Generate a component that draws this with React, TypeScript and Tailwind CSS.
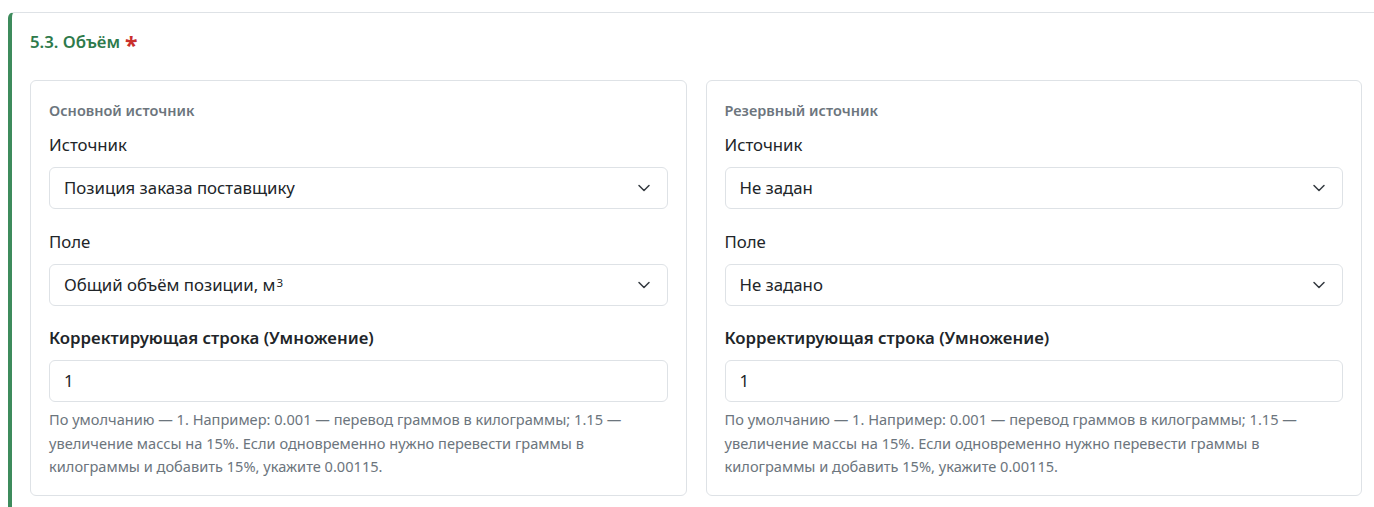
import type { ReactNode } from "react"

interface SourceBlock {
  caption: string
  source: ReactNode
  field: ReactNode
  factor: string
}

const BLOCKS: SourceBlock[] = [
  {
    caption: "Основной источник",
    source: "Позиция заказа поставщику",
    field: (
      <>
        Общий объём позиции, м<sup className="ml-[1px] text-[11.5px] relative -top-[4px]">3</sup>
      </>
    ),
    factor: "1",
  },
  {
    caption: "Резервный источник",
    source: "Не задан",
    field: "Не задано",
    factor: "1",
  },
]

function Chevron() {
  return (
    <svg width="14" height="10" viewBox="0 0 16 12" fill="none" className="shrink-0">
      <path d="m2 3 6 6 6-6" stroke="#343a40" strokeWidth="1.8" strokeLinecap="round" strokeLinejoin="round" />
    </svg>
  )
}

function FakeSelect({ children }: { children: ReactNode }) {
  return (
    <div className="flex items-center justify-between h-[42px] pl-[14px] pr-[16px] rounded-md border border-[#dee2e6] bg-white text-[16.8px] text-[#212529]">
      <span className="leading-6">{children}</span>
      <Chevron />
    </div>
  )
}

function SourceCard({ block }: { block: SourceBlock }) {
  return (
    <div className="flex-1 rounded-md border border-[#dee2e6] bg-white px-[18px] pt-[19px] pb-[16px]">
      <div className="text-[14.5px] leading-[21px] font-semibold text-[#6c757d]">{block.caption}</div>

      <div className="mt-[12px] text-[16.8px] leading-6 text-[#212529]">Источник</div>
      <div className="mt-[10px]">
        <FakeSelect>{block.source}</FakeSelect>
      </div>

      <div className="mt-[21px] text-[16.8px] leading-6 text-[#212529]">Поле</div>
      <div className="mt-[10px]">
        <FakeSelect>{block.field}</FakeSelect>
      </div>

      <div className="mt-[20px] text-[16.8px] leading-6 font-semibold text-[#212529]">
        Корректирующая строка (Умножение)
      </div>
      <div className="mt-[10px] flex items-center h-[42px] px-[14px] rounded-md border border-[#dee2e6] text-[16.8px] text-[#212529]">
        {block.factor}
      </div>
      <p className="mt-[6px] text-[14.6px] leading-[23.5px] text-[#6c757d] whitespace-nowrap">
        По умолчанию — 1. Например: 0.001 — перевод граммов в килограммы; 1.15 —
        <br />
        увеличение массы на 15%. Если одновременно нужно перевести граммы в
        <br />
        килограммы и добавить 15%, укажите 0.00115.
      </p>
    </div>
  )
}

export default function App() {
  return (
    <div className="w-[1374px] h-[507px] overflow-hidden bg-white pt-3 pl-2" style={{ fontFamily: '"Noto Sans", sans-serif' }}>
      <section className="h-full border-t border-t-[#dee2e6] border-l-4 border-l-[#3d8b5c] rounded-tl-md pl-[18px] pr-3 pt-[17px]">
        <h3 className="flex items-center text-[16.8px] leading-6 font-semibold text-[#2e7a4b]">
          5.3. Объём
          <span className="ml-[5px] text-[23px] leading-none font-bold text-[#c9302c] relative top-[3px]">*</span>
        </h3>
        <div className="mt-[26px] flex gap-[19px]">
          {BLOCKS.map((b) => (
            <SourceCard key={b.caption} block={b} />
          ))}
        </div>
      </section>
    </div>
  )
}
